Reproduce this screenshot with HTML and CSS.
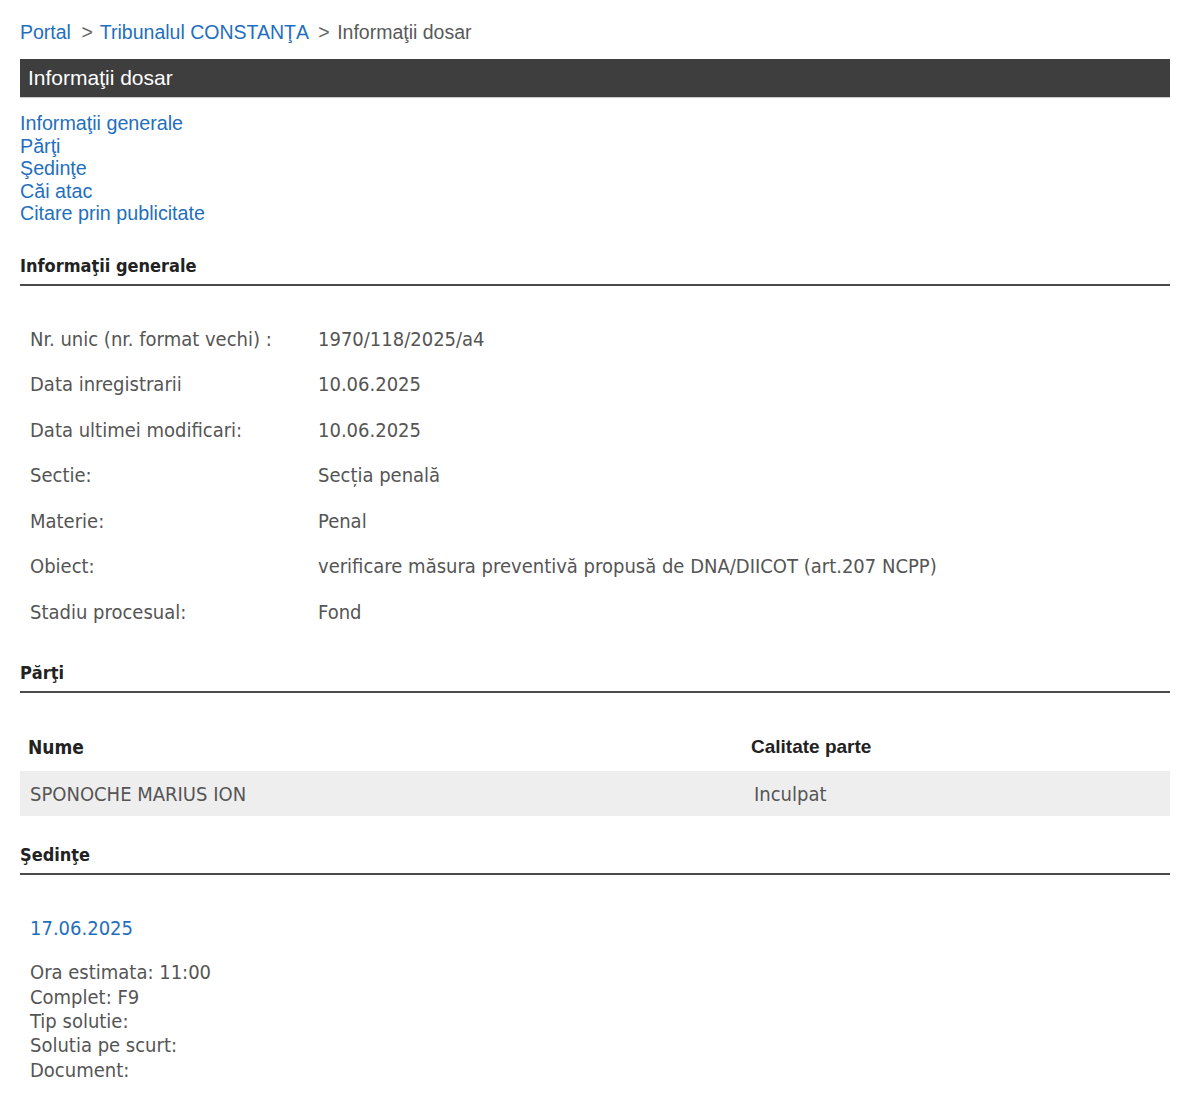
FILE: index.html
```html
<!DOCTYPE html>
<html lang="ro">
<head>
    <meta charset="UTF-8">
    <meta name="viewport" content="width=device-width, initial-scale=1.0">
    <title>Informaţii dosar</title>
    <link rel="stylesheet" href="styles.css">
</head>
<body>
    <div class="page">
        <!-- Breadcrumb -->
        <div class="breadcrumb">
            <a href="#">Portal</a>
            <span class="sep">&gt;</span>
            <a href="#">Tribunalul CONSTANŢA</a>
            <span class="sep">&gt;</span>
            <span class="current">Informaţii dosar</span>
        </div>

        <div class="title-bar">Informaţii dosar</div>

        <!-- Section links -->
        <ul class="section-links">
            <li><a href="#info">Informaţii generale</a></li>
            <li><a href="#parti">Părţi</a></li>
            <li><a href="#sedinte">Şedinţe</a></li>
            <li><a href="#cai">Căi atac</a></li>
            <li><a href="#citare">Citare prin publicitate</a></li>
        </ul>

        <!-- Informatii generale -->
        <h3 class="section-title first" id="info">Informaţii generale</h3>
        <table class="info-table">
            <tr><td class="label">Nr. unic (nr. format vechi) :</td><td>1970/118/2025/a4</td></tr>
            <tr><td class="label">Data inregistrarii</td><td>10.06.2025</td></tr>
            <tr><td class="label">Data ultimei modificari:</td><td>10.06.2025</td></tr>
            <tr><td class="label">Sectie:</td><td>Secția penală</td></tr>
            <tr><td class="label">Materie:</td><td>Penal</td></tr>
            <tr><td class="label">Obiect:</td><td>verificare măsura preventivă propusă de DNA/DIICOT (art.207 NCPP)</td></tr>
            <tr><td class="label">Stadiu procesual:</td><td>Fond</td></tr>
        </table>

        <!-- Parti -->
        <h3 class="section-title" id="parti">Părţi</h3>
        <table class="parti-table">
            <tr>
                <th class="col-name">Nume</th>
                <th class="col-role">Calitate parte</th>
            </tr>
            <tr class="row-alt">
                <td>SPONOCHE MARIUS ION</td>
                <td class="role">Inculpat</td>
            </tr>
        </table>

        <!-- Sedinte -->
        <h3 class="section-title" id="sedinte">Şedinţe</h3>
        <div class="sedinta">
            <a class="sedinta-date" href="#">17.06.2025</a>
            <div class="sedinta-details">
                Ora estimata: 11:00<br>
                Complet: F9<br>
                Tip solutie:<br>
                Solutia pe scurt:<br>
                Document:
            </div>
        </div>
    </div>
</body>
</html>
```

FILE: styles.css
```css
body {
    margin: 0;
    background-color: #fff;
    font-family: "Liberation Sans", Arial, sans-serif;
    color: #555;
}
a {
    color: #1f6fbd;
    text-decoration: none;
}
.page {
    width: 1150px;
    margin: 0 20px;
}
.breadcrumb {
    padding-top: 20px;
    font-size: 19.5px;
    line-height: 24px;
    color: #5a5a5a;
}
.breadcrumb .sep {
    margin: 0 2px 0 5px;
    color: #666;
}
.title-bar {
    margin-top: 15px;
    height: 39px;
    line-height: 37px;
    padding-left: 8px;
    background-color: #3e3e3e;
    color: #fff;
    font-size: 21px;
    border-bottom: 1px solid #c8c8c8;
    box-sizing: border-box;
}
.section-links {
    list-style: none;
    margin: 14px 0 0;
    padding: 0;
    font-size: 19.7px;
    line-height: 22.6px;
}
.section-title {
    margin: 27px 0 0;
    padding-bottom: 6px;
    border-bottom: 2px solid #4a4a4a;
    font-family: "DejaVu Sans Condensed", "DejaVu Sans", sans-serif;
    font-size: 18px;
    line-height: 24px;
    color: #222;
}
.section-title.first {
    margin-top: 29px;
}
.info-table {
    margin-top: 30px;
    border-collapse: collapse;
    font-family: "DejaVu Sans Condensed", "DejaVu Sans", sans-serif;
    font-size: 20px;
    color: #555;
}
.info-table td {
    height: 45.5px;
    padding: 0 10px;
    vertical-align: middle;
}
.info-table td.label {
    width: 268px;
}
.parti-table {
    width: 100%;
    margin-top: 30px;
    border-collapse: collapse;
    font-family: "DejaVu Sans Condensed", "DejaVu Sans", sans-serif;
    font-size: 20px;
}
.parti-table th {
    text-align: left;
    height: 48px;
    padding: 0 8px;
    font-size: 19px;
    color: #222;
}
.parti-table .col-name {
    width: 707px;
}
.parti-table .col-role {
    font-family: "Liberation Sans", Arial, sans-serif;
    font-size: 19px;
}
.parti-table td {
    height: 45px;
    padding: 0 10px;
    color: #555;
}
.parti-table .row-alt {
    background-color: #eee;
}
.parti-table td.role {
    padding-left: 11px;
}
.sedinta {
    padding: 41px 10px 0;
    font-family: "DejaVu Sans Condensed", "DejaVu Sans", sans-serif;
    font-size: 20px;
}
.sedinta-date {
    display: block;
    line-height: 24px;
}
.sedinta-details {
    margin-top: 20px;
    line-height: 24.3px;
    color: #555;
}
```
